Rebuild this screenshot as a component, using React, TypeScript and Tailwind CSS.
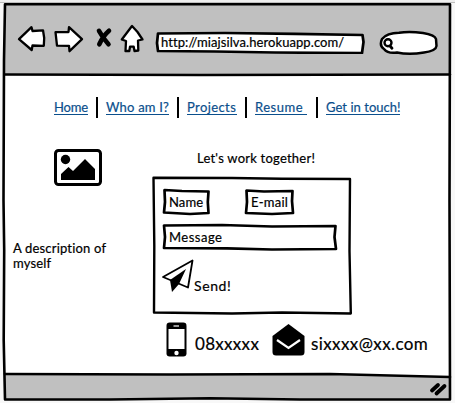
import type { ReactNode } from "react";

const stroke = { stroke: "#000", strokeLinejoin: "round", strokeLinecap: "round" } as const;

/** A box whose outline looks drawn with a marker. */
function SketchBox({ w, h, d, className, children, lineWidth = 2.7, fill = "#fff" }: {
  w: number; h: number; d: string; className: string; children?: ReactNode; lineWidth?: number; fill?: string;
}) {
  return (
    <div className={`relative shrink-0 ${className}`}>
      <svg className="absolute inset-0" width={w} height={h} viewBox={`0 0 ${w} ${h}`}>
        <path d={d} fill={fill} {...stroke} strokeWidth={lineWidth} />
      </svg>
      <div className="relative h-full">{children}</div>
    </div>
  );
}

function Toolbar() {
  return (
    <header className="flex h-[75px] w-[455px] shrink-0 items-start pl-[17px]">
      <svg className="mt-[24px] shrink-0" width="29" height="28" viewBox="0 0 29 28">
        <path d="M2 15.2L14.5 3.2L15.5 7L26 6.3L27.2 14L26.8 21.8L15.5 21.5L14.7 26Z" fill="#fff" {...stroke} strokeWidth="2.3" />
      </svg>
      <svg className="ml-[8px] mt-[24px] shrink-0" width="31" height="29" viewBox="0 0 31 29">
        <path d="M1.5 8.2L14.5 8L15 3.2L28 15.2L15.5 27.2L15 21.8L3 21.6Z" fill="#fff" {...stroke} strokeWidth="2.3" />
      </svg>
      <svg className="ml-[10px] mt-[27px] shrink-0" width="18" height="22" viewBox="0 0 18 22">
        <path d="M4 3.8Q8 11 13.5 17.3M14 3.8Q8 9 4.3 17.3" fill="none" {...stroke} strokeWidth="4.6" />
      </svg>
      <svg className="ml-[7px] mt-[24px] shrink-0" width="25" height="30" viewBox="0 0 25 30">
        <path d="M12 2L1.8 15.5L6 17L5.5 27H9.3L10 22.7H13.7L14.5 27L18.3 26.5L18 16.5L22.5 15.5L17.5 8Z" fill="#fff" {...stroke} strokeWidth="2.3" />
      </svg>
      <SketchBox w={210} h={24} className="ml-[10px] mt-[30px] h-[24px] w-[210px]"
        d="M3 3.5L70 3L140 3.8L207.5 5L208.5 12L207 23L120 22.5L60 21.5L3 21L2 13Z">
        <span className="block whitespace-nowrap pl-[6px] pt-[3px] text-[13px] leading-[18px] tracking-[0.08px]">http://miajsilva.herokuapp.com/</span>
      </SketchBox>
      <svg className="ml-[14px] mt-[30px] shrink-0" width="61" height="27" viewBox="0 0 61 27">
        <path d="M3 9Q8 3 20 2.8Q30 1 44 3Q56 5 57 9L57.5 16Q57 21 45 22.5Q30 25 18 22.5Q9 24 5 19Q0 16 3 9Z" fill="#fff" {...stroke} strokeWidth="2.5" />
        <circle cx="9" cy="12.7" r="3.5" fill="#fff" {...stroke} strokeWidth="2.4" />
        <path d="M11 16L13 18.2" {...stroke} strokeWidth="2.8" />
      </svg>
    </header>
  );
}

function NavLink({ label, className }: { label: string; className: string }) {
  return (
    <a className={`mb-[3px] h-[17px] shrink-0 whitespace-pre border-b border-[#0b4f8c] text-[13px] leading-[18px] text-[#0b4f8c] ${className}`}>{label}</a>
  );
}

function Divider({ className }: { className: string }) {
  return <span className={`h-[21px] w-[2px] shrink-0 bg-black ${className}`} />;
}

function Nav() {
  return (
    <nav className="mt-[22px] flex h-[21px] shrink-0 items-center pl-[54px]">
      <NavLink label="Home" className="w-[34px] tracking-[-0.2px]" />
      <Divider className="ml-[8px]" />
      <NavLink label="Who am I?" className="ml-[8px] w-[63px] tracking-[0.2px]" />
      <Divider className="ml-[8px]" />
      <NavLink label="Projects" className="ml-[8px] w-[50px] tracking-[0.4px]" />
      <Divider className="ml-[8px]" />
      <NavLink label="Resume " className="ml-[8px] w-[52px] tracking-[0.5px]" />
      <Divider className="ml-[9px]" />
      <NavLink label="Get in touch!" className="ml-[8px] w-[74px] tracking-[0.04px]" />
    </nav>
  );
}

function ContactForm() {
  return (
    <SketchBox w={200} h={140} className="h-[140px] w-[200px]" fill="none" lineWidth={2.4}
      d="M1.5 1.7L80 2L130 2.8L198 3L197.5 75L198.8 137.5L130 136.5L80 137.5L2 136.5L2.3 70Z">
      <div className="flex flex-col pl-[10px] pt-[12px]">
        <div className="flex gap-[33px]">
          <SketchBox w={49} h={28} className="h-[28px] w-[49px]" d="M2.5 2L20 3L46.5 3.5L45.8 14L46.5 25L28 26L2 24.5L3 14Z">
            <span className="block whitespace-nowrap pl-[7px] pt-[5px] text-[13px] leading-[18px] tracking-[0.1px]">Name</span>
          </SketchBox>
          <SketchBox w={51} h={28} className="h-[28px] w-[51px]" d="M2.5 2.5L20 3.5L48.5 3L48 13L49 25L28 26L2 25L3 14Z">
            <span className="block whitespace-nowrap pl-[7px] pt-[5px] text-[13px] leading-[18px] tracking-[0.25px]">E-mail</span>
          </SketchBox>
        </div>
        <SketchBox w={176} h={28} className="mt-[7px] h-[28px] w-[176px]" d="M2 2.5L60 2L110 3.5L173.5 3L172.5 14L174 26L110 26.5L65 25.3L2 25L3 14Z">
          <span className="block whitespace-nowrap pl-[7px] pt-[5px] text-[13px] leading-[18px] tracking-[0.5px]">Message</span>
        </SketchBox>
        <div className="mt-[8px] flex">
          <svg className="shrink-0" width="32" height="34" viewBox="0 0 32 34">
            <path d="M1 18L30.5 1.5L26 28.5Z" fill="#fff" {...stroke} strokeWidth="1.8" />
            <path d="M24 10L8 21L10 33L17 25Z" />
          </svg>
          <span className="mt-[18px] whitespace-nowrap text-[14px] leading-[18px] tracking-[0.6px]">Send!</span>
        </div>
      </div>
    </SketchBox>
  );
}

function PhoneIcon() {
  return (
    <svg className="shrink-0" width="21" height="35" viewBox="0 0 21 35">
      <rect x="0.5" y="0.5" width="20" height="34" rx="3.2" />
      <rect x="2.5" y="7" width="16" height="20" fill="#fff" />
      <path d="M7.5 4H13" stroke="#fff" strokeWidth="1.2" />
      <circle cx="10.5" cy="31" r="2.2" fill="#fff" />
    </svg>
  );
}

function EnvelopeIcon() {
  return (
    <svg className="ml-[12px] shrink-0" width="33" height="33" viewBox="0 0 33 33">
      <path d="M.5 13L16.5 1L32.5 13V29Q32.5 32.5 29 32.5H4Q.5 32.5 .5 29Z" />
      <path d="M5 17L16.5 25L28 17" fill="none" stroke="#fff" strokeWidth="2.2" />
    </svg>
  );
}

export default function App() {
  return (
    <div className="relative flex h-[403px] w-[455px] flex-col overflow-hidden bg-[#f8f8f8] font-[Lato,sans-serif] text-black [-webkit-text-stroke:0.2px_currentColor]">
      <svg className="absolute inset-0" width="455" height="403" viewBox="0 0 455 403">
        <path d="M0 0H455V2.5H0Z" fill="#eee" />
        <path d="M0 2.5H455" stroke="#bdbdbd" />
        <path d="M5 4L450 4L449.5 200L450 399.5L240 398.5L110 399.5L5 399.5L4 250L4.5 130Z" fill="#fff" />
        <path d="M5 4H450V74.5H5Z" fill="#c0c0c0" />
        <path d="M5 374L330 374L450 377V399.5H5Z" fill="#c0c0c0" />
        <g fill="none" {...stroke} strokeWidth="2.6">
          <path d="M5 4.3L450 4.3L449.5 200L450 399.5L300 399.5L210 398.3L110 399.5L5 399.5L3.7 340L4.2 250L3.5 200L4 60Z" />
          <path d="M5 74.5L200 75L450 74.5" />
          <path d="M5 374L170 374.5L330 374L450 377" />
        </g>
        <path d="M432 390.5L438 385M436.5 393.5L444.5 386" {...stroke} strokeWidth="3.8" />
      </svg>
      <div className="relative flex flex-col">
        <Toolbar />
        <Nav />
        <main className="flex">
          <aside className="w-[152px] shrink-0 pt-[31px]">
            <svg className="ml-[54px]" width="48" height="37" viewBox="0 0 48 37">
              <rect x="1.5" y="1.5" width="45" height="34" rx="3" fill="#fff" stroke="#000" strokeWidth="3" />
              <circle cx="11.5" cy="10.5" r="4.7" />
              <path d="M7 31V25L14.5 18L19 22L31 10L41 20V31Z" />
            </svg>
            <p className="ml-[13px] mt-[55px] w-[110px] whitespace-nowrap text-[13px] leading-[15px] tracking-[0.18px]">A description of<br />myself</p>
          </aside>
          <section className="pt-[31px]">
            <h1 className="mb-[9px] ml-[45px] h-[18px] whitespace-nowrap text-[13px] leading-[18px] tracking-[0.23px]">Let's work together!</h1>
            <ContactForm />
            <div className="ml-[14px] mt-[6px] flex h-[35px] items-center text-[17px] leading-[24px]">
              <PhoneIcon />
              <span className="ml-[8px] mt-[8px] w-[65px] whitespace-nowrap tracking-[0.3px]">08xxxxx</span>
              <EnvelopeIcon />
              <span className="ml-[6px] mt-[8px] whitespace-nowrap tracking-[0.4px]">sixxxx@xx.com</span>
            </div>
          </section>
        </main>
      </div>
    </div>
  );
}
